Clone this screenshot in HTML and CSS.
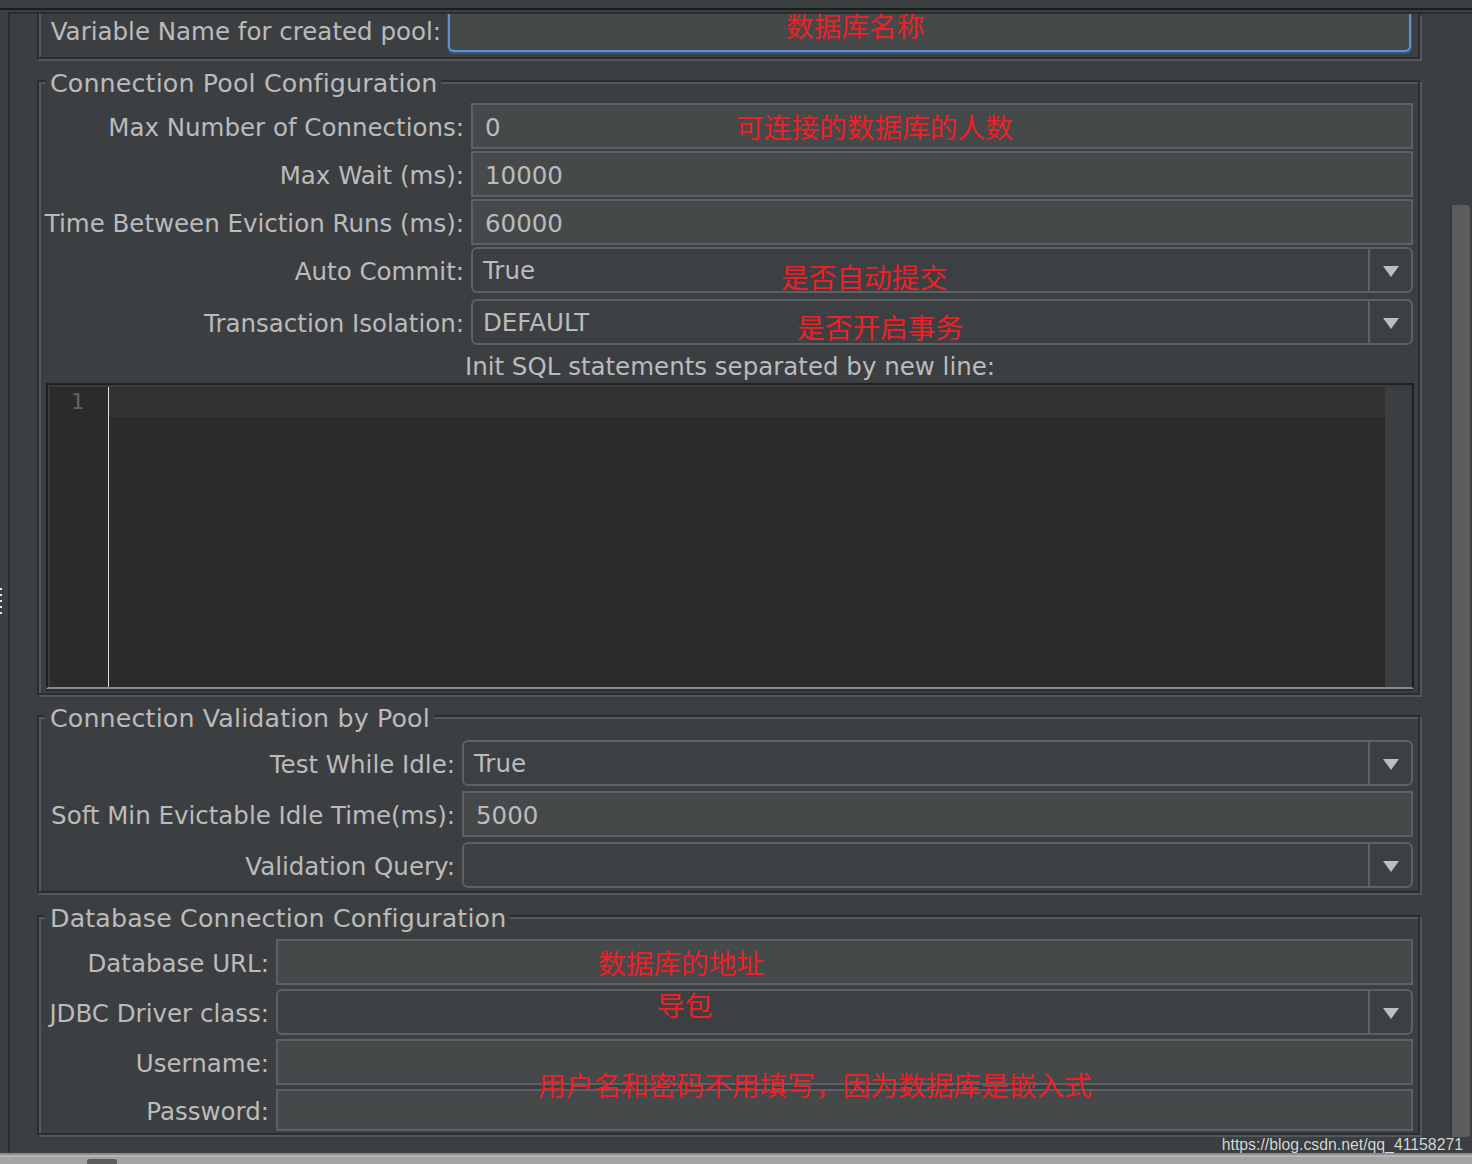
FILE: index.html
```html
<!DOCTYPE html>
<html lang="zh-CN">
<head>
    <meta charset="UTF-8">
    <meta name="viewport" content="width=device-width, initial-scale=1.0">
    <title>JDBC Connection Configuration</title>
    <link rel="stylesheet" href="styles.css">
</head>
<body>
    <div class="screen">
        <div class="topbar"></div>

        <div class="window">
            <div class="splitter">
                <span class="grip"></span>
                <span class="grip"></span>
                <span class="grip"></span>
                <span class="grip"></span>
                <span class="grip"></span>
            </div>

            <div class="panel">
                <div class="content">
                    <div class="group group-name">
                        <div class="form">
                            <div class="form-row form-row-name">
                                <label class="field-label">Variable Name for created pool:</label>
                                <div class="text-field focused"></div>
                            </div>
                        </div>
                    </div>

                    <div class="group group-pool">
                        <div class="group-title">Connection Pool Configuration</div>
                        <div class="form">
                            <div class="form-row">
                                <label class="field-label">Max Number of Connections:</label>
                                <div class="text-field">0</div>
                            </div>
                            <div class="form-row">
                                <label class="field-label">Max Wait (ms):</label>
                                <div class="text-field">10000</div>
                            </div>
                            <div class="form-row">
                                <label class="field-label">Time Between Eviction Runs (ms):</label>
                                <div class="text-field">60000</div>
                            </div>
                            <div class="form-row">
                                <label class="field-label">Auto Commit:</label>
                                <div class="combo">
                                    <span class="combo-value">True</span>
                                    <span class="combo-arrow"><svg width="16" height="11" viewBox="0 0 16 11"><path d="M0 0H16L8 11Z" fill="#bdbdbd"/></svg></span>
                                </div>
                            </div>
                            <div class="form-row mt-4">
                                <label class="field-label">Transaction Isolation:</label>
                                <div class="combo">
                                    <span class="combo-value">DEFAULT</span>
                                    <span class="combo-arrow"><svg width="16" height="11" viewBox="0 0 16 11"><path d="M0 0H16L8 11Z" fill="#bdbdbd"/></svg></span>
                                </div>
                            </div>
                            <div class="init-label">Init SQL statements separated by new line:</div>
                            <div class="editor">
                                <div class="gutter">1</div>
                                <div class="code">
                                    <div class="code-current"></div>
                                </div>
                                <div class="editor-vscroll"></div>
                            </div>
                        </div>
                    </div>

                    <div class="group group-validation">
                        <div class="group-title">Connection Validation by Pool</div>
                        <div class="form">
                            <div class="form-row">
                                <label class="field-label">Test While Idle:</label>
                                <div class="combo">
                                    <span class="combo-value">True</span>
                                    <span class="combo-arrow"><svg width="16" height="11" viewBox="0 0 16 11"><path d="M0 0H16L8 11Z" fill="#bdbdbd"/></svg></span>
                                </div>
                            </div>
                            <div class="form-row">
                                <label class="field-label">Soft Min Evictable Idle Time(ms):</label>
                                <div class="text-field">5000</div>
                            </div>
                            <div class="form-row">
                                <label class="field-label">Validation Query:</label>
                                <div class="combo">
                                    <span class="combo-value"></span>
                                    <span class="combo-arrow"><svg width="16" height="11" viewBox="0 0 16 11"><path d="M0 0H16L8 11Z" fill="#bdbdbd"/></svg></span>
                                </div>
                            </div>
                        </div>
                    </div>

                    <div class="group group-database">
                        <div class="group-title">Database Connection Configuration</div>
                        <div class="form">
                            <div class="form-row">
                                <label class="field-label">Database URL:</label>
                                <div class="text-field"></div>
                            </div>
                            <div class="form-row">
                                <label class="field-label">JDBC Driver class:</label>
                                <div class="combo">
                                    <span class="combo-value"></span>
                                    <span class="combo-arrow"><svg width="16" height="11" viewBox="0 0 16 11"><path d="M0 0H16L8 11Z" fill="#bdbdbd"/></svg></span>
                                </div>
                            </div>
                            <div class="form-row">
                                <label class="field-label">Username:</label>
                                <div class="text-field"></div>
                            </div>
                            <div class="form-row form-row-compact">
                                <label class="field-label">Password:</label>
                                <div class="text-field"></div>
                            </div>
                        </div>
                    </div>
                </div>

                <div class="scrollbar">
                    <div class="scroll-thumb"></div>
                </div>
            </div>
        </div>

        <div class="statusbar">
            <span class="status-tab"></span>
        </div>

        <!-- red notes drawn on top of the screenshot -->
        <div class="note note-name">数据库名称</div>
        <div class="note note-max">可连接的数据库的人数</div>
        <div class="note note-commit">是否自动提交</div>
        <div class="note note-isolation">是否开启事务</div>
        <div class="note note-url">数据库的地址</div>
        <div class="note note-driver">导包</div>
        <div class="note note-user">用户名和密码不用填写，因为数据库是嵌入式</div>

        <div class="watermark">https://blog.csdn.net/qq_41158271</div>
    </div>
</body>
</html>
```

FILE: styles.css
```css
* {
    margin: 0;
    padding: 0;
    box-sizing: border-box;
}

body {
    font-family: "DejaVu Sans", "Noto Sans", sans-serif;
    background: #3c3f41;
    color: #bbbbbb;
    overflow: hidden;
}

.screen {
    position: relative;
    width: 1472px;
    height: 1164px;
}

.topbar {
    height: 10px;
    border-bottom: 2px solid #1c1d1e;
}

.window {
    display: flex;
    height: 1143px;
    overflow: hidden;
}

.splitter {
    width: 8px;
    flex: none;
    display: flex;
    flex-direction: column;
    gap: 4px;
    padding-top: 578px;
}

.grip {
    width: 2px;
    height: 2px;
    background: #e6e6e6;
}

.panel {
    flex: 1;
    display: flex;
    margin-top: 2px;
    border-top: 2px solid #2b2d2e;
    border-left: 2px solid #2b2d2e;
    padding-bottom: 18px;
}

.content {
    width: 1410px;
    flex: none;
    padding-left: 27px;
}

/* etched group border */
.group {
    width: 1383px;
    border: 2px solid #2b2d2e;
    box-shadow: inset 2px 2px 0 #55585a, 2px 2px 0 #55585a;
    margin-bottom: 20px;
}

.group-name {
    border-top: none;
    box-shadow: inset 2px 0 0 #55585a, 2px 2px 0 #55585a;
    margin-bottom: 21px;
}

.group-validation {
    margin-bottom: 22px;
}

.group-database {
    margin-bottom: 0;
}

.group-title {
    width: fit-content;
    margin: -13px 0 0 6px;
    padding: 0 4px 0 5px;
    background: #3c3f41;
    font-size: 25.3px;
    letter-spacing: 0.15px;
    line-height: 30px;
    white-space: nowrap;
}

.form {
    display: flex;
    flex-direction: column;
    gap: 2px;
    padding: 4px 5px 4px 8px;
}

.group-name .form {
    padding: 0 7px 5px 8px;
}

.group-validation .form {
    gap: 5px;
    padding-top: 6px;
    padding-bottom: 3px;
}

.group-database .form {
    gap: 4px;
    padding-top: 5px;
    padding-bottom: 2px;
}

.form-row {
    display: flex;
    align-items: center;
    gap: 7px;
    height: 46px;
}

.form-row-name {
    height: 38px;
}

.form-row-compact {
    height: 42px;
}

.mt-4 {
    margin-top: 4px;
}

.field-label {
    flex: none;
    display: flex;
    justify-content: flex-end;
    white-space: nowrap;
    font-size: 24.5px;
    line-height: 30px;
    padding-top: 3px;
}

.form-row-name .field-label {
    width: 394px;
    padding-top: 0;
    padding-bottom: 2px;
}

.group-pool .field-label {
    width: 417px;
}

.group-validation .field-label {
    width: 408px;
}

.group-database .field-label {
    width: 222px;
}

.text-field {
    flex: 1;
    height: 100%;
    display: flex;
    align-items: center;
    padding: 2px 0 0 12px;
    background: #45494a;
    border: 2px solid #5e6163;
    font-size: 24.5px;
}

.text-field.focused {
    border: 2px solid #5b93d3;
    border-top: none;
    border-radius: 0 0 6px 6px;
    box-shadow: 0 1px 0 1px #37597e;
}

.combo {
    flex: 1;
    height: 100%;
    display: flex;
    background: #3d4043;
    border: 2px solid #5e6163;
    border-radius: 6px;
    font-size: 24.5px;
}

.combo-value {
    flex: 1;
    display: flex;
    align-items: center;
    padding-left: 10px;
    padding-top: 1px;
}

.combo-arrow {
    width: 43px;
    display: flex;
    align-items: center;
    justify-content: center;
    border-left: 2px solid #5e6163;
    padding-top: 2px;
}

.init-label {
    margin-top: -2px;
    height: 36px;
    padding-top: 7px;
    text-align: center;
    font-size: 24.5px;
    line-height: 30px;
    white-space: nowrap;
}

.editor {
    height: 306px;
    margin: 0 -1px;
    display: flex;
    padding: 2px 0 0 2px;
    background: #3a3d3f;
    border: 2px solid #1e2021;
    border-bottom-color: #8a8b8c;
    box-shadow: 0 2px 0 #2b2d2e;
}

.gutter {
    width: 59px;
    flex: none;
    background: #2b2b2b;
    border-right: 1px solid #dedede;
    padding-right: 24px;
    text-align: right;
    font-family: "DejaVu Sans Mono", monospace;
    font-size: 22px;
    line-height: 30px;
    color: #606366;
}

.code {
    flex: 1;
    background: #2b2b2b;
}

.code-current {
    height: 30px;
    background: #323232;
}

.editor-vscroll {
    width: 27px;
    flex: none;
    background: #3c3f41;
}

.scrollbar {
    width: 20px;
    flex: none;
    margin-left: 30px;
    padding-top: 191px;
}

.scroll-thumb {
    height: 932px;
    background: #5a5c5e;
    border-left: 2px solid #353739;
    border-radius: 0 3px 3px 0;
}

.statusbar {
    height: 11px;
    display: flex;
    align-items: flex-end;
    background: #a3a3a3;
    border-top: 2px solid #8c8d8e;
    box-shadow: inset 0 2px 0 #b4b4b4;
}

.status-tab {
    width: 30px;
    height: 5px;
    margin-left: 87px;
    background: #5c5c5c;
    border-radius: 3px 3px 0 0;
}

.note {
    position: absolute;
    font-family: "Noto Sans CJK SC", sans-serif;
    font-size: 27.7px;
    line-height: 1;
    color: #ec2027;
    white-space: nowrap;
}

.note-name { left: 786px; top: 12px; }
.note-max { left: 736px; top: 113px; }
.note-commit { left: 781px; top: 263px; }
.note-isolation { left: 797px; top: 313px; }
.note-url { left: 598px; top: 949px; }
.note-driver { left: 657px; top: 991px; }
.note-user { left: 538px; top: 1071px; }

.watermark {
    position: absolute;
    right: 9px;
    top: 1136px;
    font-family: "Liberation Sans", Arial, sans-serif;
    font-size: 15.8px;
    line-height: 18px;
    color: #d8d8d8;
    text-shadow: 0 0 1px rgba(0, 0, 0, 0.4);
}
```
